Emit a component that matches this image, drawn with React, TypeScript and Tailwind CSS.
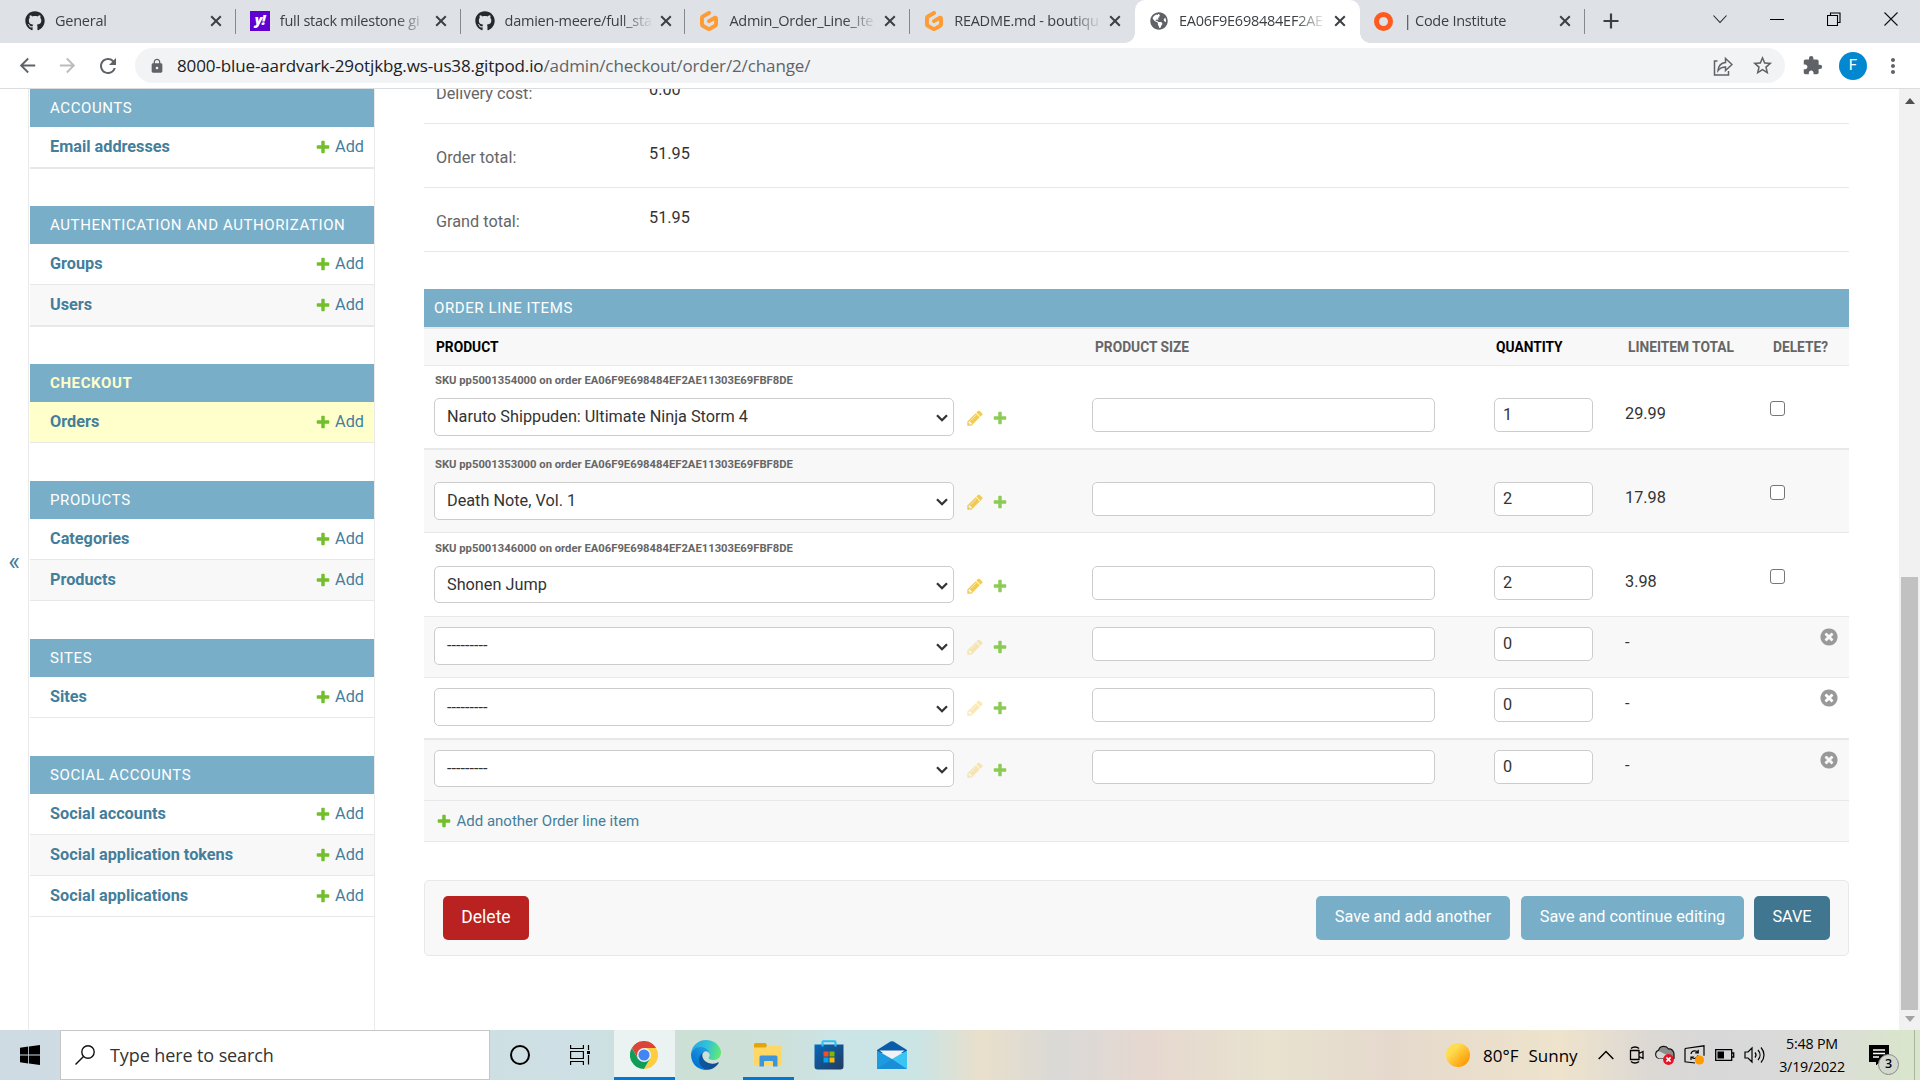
import React from "react";
import { FaGithub, FaGlobeAmericas } from "react-icons/fa";
import { SiGitpod } from "react-icons/si";
import {
  MdArrowBack,
  MdArrowForward,
  MdRefresh,
  MdLock,
  MdStarBorder,
  MdExtension,
  MdMoreVert,
} from "react-icons/md";

const UI = "font-['Open_Sans','Noto_Sans',sans-serif]";

/* ---------- admin icons ---------- */

function Plus({ className = "" }: { className?: string }) {
  return (
    <svg viewBox="0 0 1792 1792" className={"h-4 w-4 shrink-0 " + className}>
      <path
        fill="#70bf2b"
        d="M1600 796v192q0 40-28 68t-68 28h-416v416q0 40-28 68t-68 28h-192q-40 0-68-28t-28-68v-416h-416q-40 0-68-28t-28-68v-192q0-40 28-68t68-28h416v-416q0-40 28-68t68-28h192q40 0 68 28t28 68v416h416q40 0 68 28t28 68z"
      />
    </svg>
  );
}

function Pencil({ className = "" }: { className?: string }) {
  return (
    <svg viewBox="0 0 1792 1792" className={"h-[18px] w-[18px] shrink-0 " + className}>
      <path
        fill="#efb80b"
        d="M491 1536l91-91-235-235-91 91v107h128v128h107zm523-928q0-22-22-22-10 0-17 7l-542 542q-7 7-7 17 0 22 22 22 10 0 17-7l542-542q7-7 7-17zm-54-192l416 416-832 832h-416v-416zm683 96q0 53-37 90l-166 166-416-416 166-165q36-38 90-38 53 0 91 38l235 234q37 39 37 91z"
      />
    </svg>
  );
}

function RemoveIcon() {
  return (
    <svg viewBox="0 0 1792 1792" className="h-5 w-5">
      <path
        fill="#999999"
        d="M1277 1122q0-26-19-45l-181-181 181-181q19-19 19-45 0-27-19-46l-90-90q-19-19-46-19-26 0-45 19l-181 181-181-181q-19-19-45-19-27 0-46 19l-90 90q-19 19-19 46 0 26 19 45l181 181-181 181q-19 19-19 45 0 27 19 46l90 90q19 19 46 19 26 0 45-19l181-181 181 181q19 19 45 19 27 0 46-19l90-90q19-19 19-46zm387-226q0 209-103 385.500t-279.500 279.500-385.500 103-385.500-103-279.500-279.500-103-385.500 103-385.500 279.500-279.500 385.500-103 385.500 103 279.500 279.500 103 385.500z"
      />
    </svg>
  );
}

/* ---------- browser chrome ---------- */

type TabInfo = { title: string; icon: React.ReactNode; active?: boolean };

const tabs: TabInfo[] = [
  { title: "General", icon: <FaGithub className="h-5 w-5 text-[#24292f]" /> },
  {
    title: "full stack milestone gi",
    icon: (
      <span className="flex h-5 w-5 items-center justify-center bg-[#5f01d1] pb-[3px] text-[14px] font-extrabold italic leading-none tracking-[-1px] text-white">
        y!
      </span>
    ),
  },
  { title: "damien-meere/full_sta", icon: <FaGithub className="h-5 w-5 text-[#24292f]" /> },
  { title: "Admin_Order_Line_Ite", icon: <SiGitpod className="h-5 w-5 text-[#ff9b35]" /> },
  { title: "README.md - boutiqu", icon: <SiGitpod className="h-5 w-5 text-[#ff9b35]" /> },
  {
    title: "EA06F9E698484EF2AE",
    icon: <FaGlobeAmericas className="h-[18px] w-[18px] text-[#5f6368]" />,
    active: true,
  },
  {
    title: "| Code Institute",
    icon: <span className="h-[19px] w-[19px] rounded-full border-[5px] border-[#ff5a1f]" />,
  },
];

function CloseX() {
  return (
    <svg viewBox="0 0 12 12" className="h-3 w-3 shrink-0">
      <path d="M1.2 1.2l9.6 9.6M10.8 1.2L1.2 10.8" stroke="#3c4043" strokeWidth="2" />
    </svg>
  );
}

function Tab({ tab, divider }: { tab: TabInfo; divider: boolean }) {
  return (
    <div
      className={
        "relative flex h-[43px] w-[224.8px] shrink-0 items-center pb-px pl-[14px] " +
        (tab.active ? "rounded-t-[10px] bg-white" : "")
      }
    >
      {tab.active && (
        <>
          <span className="absolute bottom-0 -left-[10px] h-[10px] w-[10px] bg-[radial-gradient(circle_at_0_0,transparent_9.5px,white_10px)]" />
          <span className="absolute bottom-0 -right-[10px] h-[10px] w-[10px] bg-[radial-gradient(circle_at_100%_0,transparent_9.5px,white_10px)]" />
        </>
      )}
      <span className="flex w-5 shrink-0 justify-center">{tab.icon}</span>
      <span className="ml-[10px] w-[148px] whitespace-nowrap text-[14.5px] leading-5 tracking-[-0.25px] text-[#3c4043] [mask-image:linear-gradient(to_right,black_116px,transparent_148px)]">
        {tab.title}
      </span>
      <span className="ml-[7px] flex">
        <CloseX />
      </span>
      {divider && <span className="absolute right-0 top-[9px] h-[25px] w-px bg-[#85888d]" />}
    </div>
  );
}

function TabStrip() {
  return (
    <div className="flex h-[43px] bg-[#dee1e6] pl-[11px]">
      {tabs.map((t, i) => (
        <Tab key={t.title} tab={t} divider={i !== 4 && i !== 5} />
      ))}
      <div className="flex h-[42px] w-[53px] items-center justify-center">
        <svg viewBox="0 0 16 16" className="h-4 w-4">
          <path d="M8 .5v15M.5 8h15" stroke="#3c4043" strokeWidth="2.2" />
        </svg>
      </div>
      <div className="ml-auto flex h-[37px] items-center">
        <svg viewBox="0 0 14 14" className="mr-[43px] h-[14px] w-[14px]">
          <path d="M.5 3.5L7 10.5l6.500-7" fill="none" stroke="#222" strokeWidth="1.1" />
        </svg>
        <svg viewBox="0 0 14 14" className="mr-[43px] h-[14px] w-[14px]">
          <path d="M0 7.500h14" stroke="#000" strokeWidth="1" />
        </svg>
        <svg viewBox="0 0 14 14" className="mr-[43px] h-[14px] w-[14px]">
          <path d="M.5 3.500h10v10h-10zM3.500 3V1h9.500v9.500h-2" fill="none" stroke="#000" strokeWidth="1.1" />
        </svg>
        <svg viewBox="0 0 14 14" className="mr-[22px] h-[14px] w-[14px]">
          <path d="M.5.5l13 13M13.500.5l-13 13" stroke="#111" strokeWidth="1.1" />
        </svg>
      </div>
    </div>
  );
}

function Toolbar() {
  return (
    <div className="flex h-[46px] items-center border-b border-[#dadce0] bg-white pl-4">
      <MdArrowBack className="h-[23px] w-[23px] text-[#5f6368]" />
      <MdArrowForward className="ml-[17px] h-[23px] w-[23px] text-[#babcbe]" />
      <MdRefresh className="ml-[17px] h-[24px] w-[24px] text-[#5f6368]" />
      <div className="ml-[15px] flex h-[35px] w-[1650px] items-center rounded-full bg-[#f1f3f4] pl-[14px]">
        <MdLock className="h-4 w-4 text-[#5f6368]" />
        <span className="ml-[12px] whitespace-nowrap text-[17px] leading-6 tracking-[-0.12px] text-[#5f6368]">
          <span className="text-[#202124]">8000-blue-aardvark-29otjkbg.ws-us38.gitpod.io</span>
          /admin/checkout/order/2/change/
        </span>
        <svg viewBox="0 0 20 20" className="ml-auto mr-[18px] h-5 w-5" fill="none" stroke="#5f6368" strokeWidth="1.5">
          <path d="M4.500 5H1.500v14h14v-4" />
          <path d="M5 14.500c.5-5 3-7.500 7.500-8V2.500l6.500 6-6.500 6V11c-3.500 0-5.500 1-7.500 3.500z" />
        </svg>
        <MdStarBorder className="mr-[11px] h-[23px] w-[23px] text-[#5f6368]" />
      </div>
      <MdExtension className="ml-[17px] h-[21px] w-[21px] text-[#5f6368]" />
      <span className="ml-[16px] flex h-7 w-7 items-center justify-center rounded-full bg-[#0288d1] font-['Roboto'] text-[15px] text-white">
        F
      </span>
      <MdMoreVert className="ml-[14px] h-6 w-6 text-[#5f6368]" />
    </div>
  );
}

/* ---------- sidebar ---------- */

type Module = { caption: string; rows: string[]; thickEnd?: boolean; current?: boolean };

const modules: Module[] = [
  { caption: "Accounts", rows: ["Email addresses"], thickEnd: true },
  { caption: "Authentication and Authorization", rows: ["Groups", "Users"], thickEnd: true },
  { caption: "Checkout", rows: ["Orders"], current: true },
  { caption: "Products", rows: ["Categories", "Products"] },
  { caption: "Sites", rows: ["Sites"] },
  { caption: "Social Accounts", rows: ["Social accounts", "Social application tokens", "Social applications"] },
];

function SidebarModule({ m }: { m: Module }) {
  return (
    <section className={m.thickEnd ? "mb-[37px]" : "mb-[38px]"}>
      <h2
        className={
          "flex h-[38px] items-center bg-[#79aec8] pl-5 text-[15px] uppercase tracking-[0.6px] " +
          (m.current ? "font-bold text-[#ffffcc]" : "text-white")
        }
      >
        {m.caption}
      </h2>
      {m.rows.map((r, i) => {
        const thick = m.thickEnd && i === m.rows.length - 1;
        return (
          <div
            key={r}
            className={
              "flex items-center border-[#e8e8e8] pl-5 pr-[10px] text-[16.25px] text-[#447e9b] " +
              (thick ? "h-[42px] border-b-2 " : "h-[41px] border-b ") +
              (m.current ? "bg-[#ffffcc]" : i % 2 ? "bg-[#f8f8f8]" : "bg-white")
            }
          >
            <a className="font-bold">{r}</a>
            <a className="ml-auto flex items-center">
              <Plus className="mr-[4px]" />
              Add
            </a>
          </div>
        );
      })}
    </section>
  );
}

/* ---------- main form ---------- */

const totals = [
  ["Delivery cost:", "0.00"],
  ["Order total:", "51.95"],
  ["Grand total:", "51.95"],
];

type Item = {
  sku?: string;
  product: string;
  qty: string;
  total: string;
  box: string;
  pad: string;
  select: string;
};

const items: Item[] = [
  { sku: "SKU pp5001354000 on order EA06F9E698484EF2AE11303E69FBF8DE", product: "Naruto Shippuden: Ultimate Ninja Storm 4", qty: "1", total: "29.99", box: "h-[84px] border-b-2 bg-white", pad: "h-8 pt-[9px]", select: "h-[38px] pt-px" },
  { sku: "SKU pp5001353000 on order EA06F9E698484EF2AE11303E69FBF8DE", product: "Death Note, Vol. 1", qty: "2", total: "17.98", box: "h-[83px] border-b bg-[#f8f8f8]", pad: "h-8 pt-[9px]", select: "h-[38px]" },
  { sku: "SKU pp5001346000 on order EA06F9E698484EF2AE11303E69FBF8DE", product: "Shonen Jump", qty: "2", total: "3.98", box: "h-[84px] border-b bg-white", pad: "h-[33px] pt-[10px]", select: "h-[37px] pt-px" },
  { product: "---------", qty: "0", total: "-", box: "h-[61px] border-b bg-[#f8f8f8]", pad: "h-[10px]", select: "h-[38px] pt-px" },
  { product: "---------", qty: "0", total: "-", box: "h-[62px] border-b-2 bg-white", pad: "h-[10px]", select: "h-[38px] pt-[2px]" },
  { product: "---------", qty: "0", total: "-", box: "h-[61px] border-b bg-[#f8f8f8]", pad: "h-[10px]", select: "h-[37px] pt-px" },
];

const cols = "grid grid-cols-[668px_402px_132px_144px_79px]";

function ItemRow({ item }: { item: Item }) {
  const saved = !!item.sku;
  return (
    <div className={"border-[#e8e8e8] " + item.box}>
      <div className={"overflow-hidden pl-[11px] text-[11.25px] font-bold leading-3 text-[#666] " + item.pad}>
        {item.sku}
      </div>
      <div className={cols}>
        <div className="flex items-start pl-[10px]">
          <div
            className={
              "flex w-[520px] items-center justify-between rounded-[5px] border border-[#ccc] bg-white pl-[12px] pr-[5px] text-[16.25px] text-[#333] " +
              item.select
            }
          >
            {item.product}
            <svg viewBox="0 0 12 8" className="mt-px h-2 w-3">
              <path d="M1 1.200l5 5 5-5" fill="none" stroke="#333" strokeWidth="2.300" />
            </svg>
          </div>
          <Pencil className={"ml-[12px] mt-[11px] " + (saved ? "opacity-70" : "opacity-30")} />
          <Plus className="ml-[8px] mt-[12px] opacity-80" />
        </div>
        <div>
          <div className="h-[34px] w-[343px] rounded-[5px] border border-[#ccc] bg-white" />
        </div>
        <div>
          <div className="flex h-[34px] w-[99px] items-center rounded-[5px] border border-[#ccc] bg-white pl-[8px] pt-px text-[16.25px] text-[#333]">
            {item.qty}
          </div>
        </div>
        <div className="-ml-px pt-[6px] text-[16.25px] leading-5 text-[#333]">{item.total}</div>
        {saved ? (
          <div className="pt-[3px]">
            <div className="h-[15px] w-[15px] rounded-[3px] border border-[#767676] bg-white" />
          </div>
        ) : (
          <div className="flex pl-[49px]">
            <RemoveIcon />
          </div>
        )}
      </div>
    </div>
  );
}

function SubmitRow() {
  return (
    <div className="mt-[38px] flex h-[76px] items-center rounded-[5px] border border-[#e8e8e8] bg-[#f8f8f8] px-[18px] text-[16.25px] text-white">
      <button className="h-11 w-[86px] rounded-[5px] bg-[#ba2121] pb-[2px] text-[17.5px]">Delete</button>
      <button className="ml-auto h-11 w-[194px] rounded-[5px] bg-[#79aec8] pb-px">Save and add another</button>
      <button className="ml-[11px] h-11 w-[223px] rounded-[5px] bg-[#79aec8] pb-px">Save and continue editing</button>
      <button className="ml-[10px] h-11 w-[76px] rounded-[5px] bg-[#417690] pb-px">SAVE</button>
    </div>
  );
}

function Main() {
  return (
    <main className="w-[1425px]">
      {totals.map(([label, value], i) => (
        <div
          key={label}
          className={
            "flex items-end overflow-hidden border-b border-[#e8e8e8] text-[16.25px] leading-5 " +
            (i === 0 ? "h-[35px]" : "h-16")
          }
        >
          <div className="flex h-[63px] shrink-0">
            <span className="w-[212px] shrink-0 pl-[12px] pt-[24px] text-[#666]">{label}</span>
            <span className="pl-[13px] pt-[20px] text-[#333]">{value}</span>
          </div>
        </div>
      ))}
      <h2 className="mt-[37px] flex h-[38px] items-center bg-[#79aec8] pl-[10px] text-[15px] uppercase tracking-[0.6px] text-white">
        Order line items
      </h2>
      <div className={cols + " h-[39px] items-center border-b border-t-2 border-[#e8e8e8] bg-[#f8f8f8] pt-px text-[13.75px] font-bold text-[#666]"}>
        <span className="pl-[12px] text-black">PRODUCT</span>
        <span className="pl-[3px]">PRODUCT SIZE</span>
        <span className="pl-[2px] text-black">QUANTITY</span>
        <span className="pl-[2px]">LINEITEM TOTAL</span>
        <span className="pl-[3px]">DELETE?</span>
      </div>
      {items.map((it, i) => (
        <ItemRow key={i} item={it} />
      ))}
      <div className="flex h-[41px] items-center border-b border-[#e8e8e8] bg-[#f8f8f8] pl-3 text-[15px] text-[#447e9b]">
        <Plus className="mr-[4.5px]" />
        Add another Order line item
      </div>
      <SubmitRow />
    </main>
  );
}

function Scrollbar() {
  return (
    <div className="ml-auto flex w-[21px] flex-col items-center bg-[#f1f1f1]">
      <svg viewBox="0 0 10 6" className="mt-[9px] h-[6px] w-[10px]">
        <path d="M0 6l5-6 5 6z" fill="#505050" />
      </svg>
      <div className="mt-[473px] h-[433px] w-[17px] bg-[#c1c1c1]" />
      <svg viewBox="0 0 10 6" className="mt-[6px] h-[6px] w-[10px]">
        <path d="M0 0l5 6 5-6z" fill="#a3a3a3" />
      </svg>
    </div>
  );
}

/* ---------- taskbar ---------- */

function ChromeLogo() {
  return (
    <svg viewBox="0 0 48 48" className="h-7 w-7">
      <circle cx="24" cy="24" r="24" fill="#fff" />
      <path d="M24 12h20.800A24 24 0 0 1 24 48l10.400-18z" fill="#ffcd40" />
      <path d="M3.200 12A24 24 0 0 1 44.800 12L24 12v12L13.600 30z" fill="#db4437" />
      <path d="M3.200 12A24 24 0 0 0 24 48l10.400-18H13.600z" fill="#0f9d58" />
      <circle cx="24" cy="24" r="12" fill="#f1f1f1" />
      <circle cx="24" cy="24" r="9.500" fill="#4285f4" />
    </svg>
  );
}

function EdgeLogo() {
  return (
    <svg viewBox="0 0 256 256" className="h-[30px] w-[30px]">
      <defs>
        <linearGradient id="eg1" x1="60" y1="177" x2="241" y2="177" gradientUnits="userSpaceOnUse">
          <stop offset="0" stopColor="#0c59a4" />
          <stop offset="1" stopColor="#114a8b" />
        </linearGradient>
        <linearGradient id="eg2" x1="150" y1="95" x2="40" y2="225" gradientUnits="userSpaceOnUse">
          <stop offset="0" stopColor="#1b9de2" />
          <stop offset=".6" stopColor="#0f82d8" />
          <stop offset="1" stopColor="#0074d4" />
        </linearGradient>
        <linearGradient id="eg3" x1="20" y1="60" x2="250" y2="120" gradientUnits="userSpaceOnUse">
          <stop offset="0" stopColor="#2aa8e2" />
          <stop offset=".5" stopColor="#33c4d4" />
          <stop offset="1" stopColor="#66eb6e" />
        </linearGradient>
      </defs>
      <path
        d="M231 190.500c-3.400 1.800-6.900 3.300-10.500 4.700a101.700 101.700 0 0 1-35.900 6.500c-47.300 0-88.500-32.500-88.500-74.300a31.500 31.500 0 0 1 16.400-27.300c-42.800 1.800-53.800 46.400-53.800 72.500 0 73.900 68.100 81.400 82.800 81.400 7.900 0 19.800-2.300 27-4.600l1.300-.4a128.300 128.300 0 0 0 66.600-52.800 4 4 0 0 0-5.400-5.700z"
        fill="url(#eg1)"
      />
      <path
        d="M105.700 241.400a79.200 79.200 0 0 1-22.700-21.300 80.700 80.700 0 0 1 29.500-120c3.200-1.500 8.500-4.100 15.600-4a32.400 32.400 0 0 1 25.700 13 31.900 31.900 0 0 1 6.300 18.700c0-.2 24.500-79.600-80-79.600-43.900 0-80 41.700-80 78.200a130.200 130.200 0 0 0 12.100 56 128 128 0 0 0 156.400 67.100 75.500 75.500 0 0 1-62.800-8z"
        fill="url(#eg2)"
      />
      <path
        d="M152.300 148.900c-.8 1-3.300 2.500-3.300 5.700 0 2.600 1.700 5.200 4.800 7.300 14.400 10.100 41.700 8.700 41.700 8.700a59.900 59.900 0 0 0 30.500-8.400 61.800 61.800 0 0 0 30.400-53.100c.3-22.400-8-37.300-11.300-43.900C223.900 23.800 177.400 0 128 0A128 128 0 0 0 0 126.200c.5-36.500 36.800-66 80-66 3.500 0 23.500.3 42 10.100 16.300 8.500 24.800 18.900 30.800 29.200 6.200 10.600 7.300 24.100 7.300 29.400s-2.700 13.300-7.800 20z"
        fill="url(#eg3)"
      />
    </svg>
  );
}

function ExplorerLogo() {
  return (
    <svg viewBox="0 0 28 24" className="h-6 w-7">
      <path d="M0 1.500A1.500 1.500 0 0 1 1.500 0h10l1.500 2-1 3H0z" fill="#e5a50a" />
      <path d="M0 4.500h12l2-1.500h13.500v20H0z" fill="#ffd765" />
      <path d="M5.500 23.500V14a1.500 1.500 0 0 1 1.500-1.500h15a1.500 1.500 0 0 1 1.500 1.500v9.500h-4.500v-4.500a1 1 0 0 0-1-1h-7a1 1 0 0 0-1 1v4.500z" fill="#3d95dc" />
    </svg>
  );
}

function StoreLogo() {
  return (
    <svg viewBox="0 0 30 30" className="h-[30px] w-[30px]">
      <defs>
        <linearGradient id="st" x1="0" y1="0" x2="1" y2="1">
          <stop offset="0" stopColor="#0669bc" />
          <stop offset="1" stopColor="#243a5f" />
        </linearGradient>
      </defs>
      <path d="M.5 4.500h29v22a3 3 0 0 1-3 3h-23a3 3 0 0 1-3-3z" fill="url(#st)" />
      <path d="M8.500 6.500V2.200a1 1 0 0 1 1-1h11a1 1 0 0 1 1 1v4.300" fill="none" stroke="#29c0f5" strokeWidth="2" />
      <path d="M9.500 11.500h5v5h-5z" fill="#f25022" />
      <path d="M15.500 11.500h5v5h-5z" fill="#7fba00" />
      <path d="M9.500 17.500h5v5h-5z" fill="#00a4ef" />
      <path d="M15.500 17.500h5v5h-5z" fill="#ffb900" />
    </svg>
  );
}

function MailLogo() {
  return (
    <svg viewBox="0 0 30 28" className="h-7 w-[30px]">
      <path d="M0 9L13.500.6a3 3 0 0 1 3 0L30 9v3H0z" fill="#0a5ca8" />
      <path d="M2.500 9.500h25L15 19z" fill="#f3f3f5" />
      <path d="M0 9.500L15 18 30 28H0z" fill="#1e9be0" />
      <path d="M30 9.500V28L15 18z" fill="#38c5f4" />
      <path d="M0 28l15-10 15 10z" fill="#1b8ed8" />
    </svg>
  );
}

function Taskbar() {
  return (
    <footer className="flex h-[50px] items-center bg-[linear-gradient(90deg,#cfdbe2_0px,#cde0e4_590px,#cde0d6_690px,#cde0da_780px,#cbe4e6_840px,#cbe4e4_920px,#e9dfcb_980px,#dad9d7_1060px,#e6d8d0_1150px,#e8e2cf_1270px,#e5d9cd_1390px,#eee3cb_1560px,#dcd8d4_1650px,#d8d8da_1720px,#dbdcd8_1820px,#d9e6cb_1915px)]">
      <div className="flex w-[60px] justify-center">
        <svg viewBox="0 0 20 20" className="h-5 w-5">
          <path d="M0 2.800l8.200-1.200v7.900H0zM9 1.500L20 0v9.500H9zM0 10.400h8.200v8L0 17.200zM9 10.400h11V20L9 18.500z" fill="#000" />
        </svg>
      </div>
      <div className="flex h-[50px] w-[430px] items-center border border-[#c6c6c6] bg-white pl-[14px]">
        <svg viewBox="0 0 20 20" className="h-5 w-5" fill="none" stroke="#111" strokeWidth="1.400">
          <circle cx="13" cy="7" r="6.200" />
          <path d="M8.500 11.500L.5 19.500" />
        </svg>
        <span className="ml-[15px] text-[18px] leading-6 tracking-[-0.1px] text-[#333]">Type here to search</span>
      </div>
      <div className="flex w-[60px] justify-center">
        <span className="h-5 w-5 rounded-full border-[2.5px] border-black" />
      </div>
      <div className="flex w-[64px] justify-center pr-[4px]">
        <svg viewBox="0 0 20 20" className="h-5 w-5" fill="none" stroke="#000" strokeWidth="1.200">
          <path d="M.6 0v3.500h12.800V0M.6 6.500h12.800v7H.6zM.6 20v-3.500h12.800V20M18.500 0v5M18.500 10v9.500" />
          <path d="M17 6h3v3h-3z" fill="#000" stroke="none" />
        </svg>
      </div>
      <div className="flex h-[50px] w-[61px] items-center justify-center border-b-[3px] border-[#0078d7] bg-[#ebf3f2] pr-[2px] pt-[3px]">
        <ChromeLogo />
      </div>
      <div className="flex w-[68px] justify-center pr-[6px]">
        <EdgeLogo />
      </div>
      <div className="flex h-[50px] w-[51px] items-center justify-center border-b-[3px] border-[#0078d7] pr-[2px] pt-[2px]">
        <ExplorerLogo />
      </div>
      <div className="ml-[20px]">
        <StoreLogo />
      </div>
      <div className="ml-[33px]">
        <MailLogo />
      </div>

      <span className="ml-auto h-6 w-6 rounded-full bg-[linear-gradient(135deg,#ffdc50_30%,#ff9500_90%)]" />
      <span className="ml-[13px] w-[115px] whitespace-nowrap pt-px text-[17px] leading-6 text-black">
        <span className="mr-[10px]">80°F</span>Sunny
      </span>
      <svg viewBox="0 0 16 10" className="h-[10px] w-4">
        <path d="M.7 9L8 1.500 15.300 9" fill="none" stroke="#000" strokeWidth="1.500" />
      </svg>
      <svg viewBox="0 0 16 18" className="ml-[15px] h-[18px] w-4" fill="none" stroke="#000" strokeWidth="1.300">
        <path d="M1.500 4.500h8.500v9H1.500zM10 7.500l4-2v7l-4-2M2 2.500c2-2 6-2 8 0M2 15.500c2 2 6 2 8 0" />
      </svg>
      <svg viewBox="0 0 22 20" className="ml-[9px] h-5 w-[22px]">
        <path d="M5 13.500a4.300 4.300 0 0 1-.5-8.200A5.500 5.500 0 0 1 14.500 4a5 5 0 0 1 5.500 5v4.500z" fill="#8c8c8c" stroke="#111" strokeWidth="1.200" />
        <path d="M5 13.500a4 4 0 0 1-.3-7.500L15 11v2.500z" fill="#d5d5d5" />
        <circle cx="14.500" cy="14.500" r="5.400" fill="#e81123" />
        <path d="M12.400 12.400l4.200 4.200M16.600 12.400l-4.200 4.200" stroke="#fff" strokeWidth="1.500" />
      </svg>
      <svg viewBox="0 0 22 20" className="ml-[8px] h-5 w-[22px]" fill="none" stroke="#000" strokeWidth="1.200">
        <path d="M1 3.500L20 .8v10M1 3.500v13.300l10 1.200" />
        <path d="M7 9c.5-3.500 5-4.200 7-1.500M14.200 4.800v3h-3M14 10.500c-1 3.500-5 3.800-6.800 1.500M7 15v-3h3" />
        <circle cx="15.500" cy="15" r="4.600" fill="#ff9a00" stroke="none" />
      </svg>
      <svg viewBox="0 0 20 12" className="ml-[9px] h-3 w-5">
        <path d="M.7.7h16v10.600H.7zM17 4h1.700v4H17" fill="none" stroke="#000" strokeWidth="1.300" />
        <path d="M2.500 2.500h6.500v7H2.500z" fill="#000" />
      </svg>
      <svg viewBox="0 0 22 18" className="ml-[9px] h-[18px] w-[22px]" fill="none" stroke="#000" strokeWidth="1.200">
        <path d="M1 6h3l4-4v14l-4-4H1zM11 6.500c1.300 1.500 1.300 3.500 0 5M14 4c2.700 3 2.700 7 0 10M17 1.500c4 4.500 4 10.500 0 15" />
      </svg>
      <div className="ml-[7px] w-[78px] text-center text-[14.25px] leading-[23px] tracking-[-0.2px] text-black">
        <div>5:48 PM</div>
        <div>3/19/2022</div>
      </div>
      <div className="relative ml-[18px] h-5 w-[45px]">
        <svg viewBox="0 0 20 20" className="h-5 w-5">
          <path d="M0 0h20v17h-9l-4 3.500V17H0z" fill="#000" />
          <path d="M4 5h12M4 8.500h12M4 12h6" stroke="#fff" strokeWidth="1.300" />
        </svg>
        <span className="absolute left-[9px] top-[9px] flex h-[21px] w-[21px] items-center justify-center rounded-full border border-[#888] bg-[#d3d8cf] text-[12.500px] font-semibold text-black">
          3
        </span>
      </div>
      <span className="h-[50px] w-[6px] border-l border-[#a9b3a1]" />
    </footer>
  );
}

export default function App() {
  return (
    <div className={"flex h-[1080px] w-[1920px] flex-col overflow-hidden bg-white " + UI}>
      <TabStrip />
      <Toolbar />
      <div className="flex h-[941px] overflow-hidden font-['Roboto',sans-serif]">
        <div className="flex w-[29px] items-center justify-center border-r border-[#eaeaea] pt-[3px] text-[25px] leading-none text-[#447e9b]">
          «
        </div>
        <nav className="mr-[49px] w-[346px] border-r border-[#eaeaea] pl-px">
          {modules.map((m) => (
            <SidebarModule key={m.caption} m={m} />
          ))}
        </nav>
        <Main />
        <Scrollbar />
      </div>
      <Taskbar />
    </div>
  );
}
